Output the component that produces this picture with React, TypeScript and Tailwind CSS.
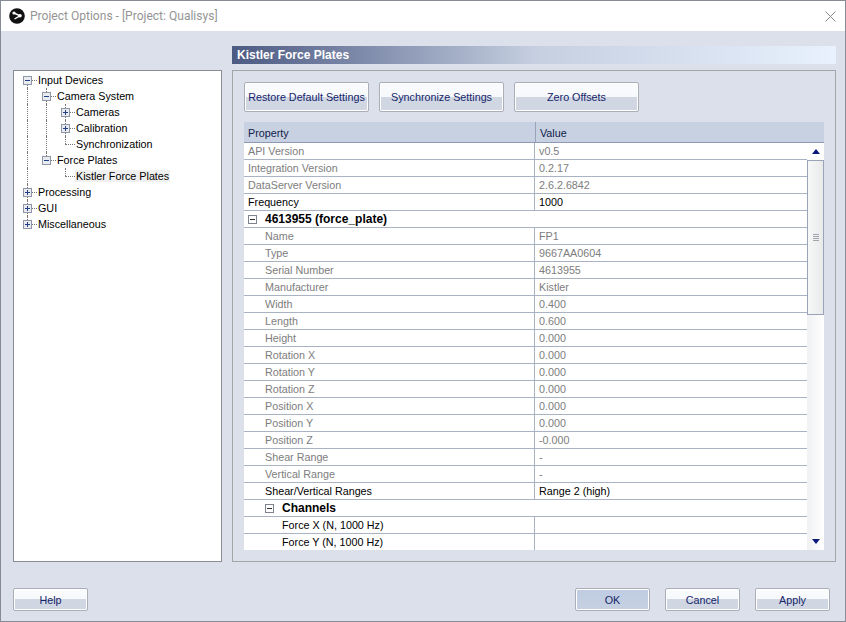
import type { ReactNode } from "react";

const font = { fontFamily: '"Liberation Sans", sans-serif' };

const Btn = ({ label, active, className }: { label: string; active?: boolean; className: string }) => (
  <div
    className={`flex items-center justify-center rounded-[2px] border border-[#a9aeb8] text-[10.75px] text-[#15256b] shadow-[inset_0_0_0_1px_#ffffff] ${className} ${
      active
        ? "bg-gradient-to-b from-[#bfcce2] to-[#c6d0e1]"
        : "bg-[linear-gradient(to_bottom,#fafbfd_0%,#f6f8fb_50%,#d0d7e3_50%,#d0d7e3_100%)]"
    }`}
  >
    {label}
  </div>
);

const Box = ({ open }: { open?: boolean }) => (
  <svg width="9" height="9" viewBox="0 0 9 9" className="shrink-0">
    <rect x="0.5" y="0.5" width="8" height="8" fill="#e9ebef" stroke="#8d97a8" />
    <path d={open ? "M2 4.5H7" : "M2 4.5H7M4.5 2V7"} stroke="#20408a" fill="none" />
  </svg>
);

// one line of the tree, the dotted guides are drawn per row
const TreeRow = ({
  depth,
  label,
  box,
  selected,
  guides = [],
  last,
  first,
}: {
  depth: number;
  label: string;
  box?: "open" | "closed";
  selected?: boolean;
  guides?: number[];
  last?: boolean;
  first?: boolean;
}) => {
  const left = 9 + depth * 19;
  return (
    <div className="relative h-4 text-[10.75px] text-black">
      {guides.map((g) => (
        <span key={g} className="absolute top-0 h-4 border-l border-dotted border-[#777]" style={{ left: 13 + g * 19 }} />
      ))}
      {last && <span className="absolute top-0 h-2 border-l border-dotted border-[#777]" style={{ left: 13 + depth * 19 }} />}
      {first && <span className="absolute top-2 h-2 border-l border-dotted border-[#777]" style={{ left: 13 }} />}
      <span className="absolute top-2 w-[10px] border-t border-dotted border-[#777]" style={{ left: left + 4 }} />
      {box && (
        <span className="absolute top-[4px]" style={{ left }}>
          <Box open={box === "open"} />
        </span>
      )}
      <span className={`absolute top-[2px] block h-3 px-px leading-3 ${selected ? "bg-[#f0f0f0]" : ""}`} style={{ left: left + 14 }}>
        {label}
      </span>
    </div>
  );
};

const Tree = () => (
  <div className="h-[492px] w-[209px] shrink-0 border border-[#8a8d94] bg-white pt-[1px]">
    <TreeRow depth={0} label="Input Devices" box="open" first />
    <TreeRow depth={1} label="Camera System" box="open" guides={[0, 1]} />
    <TreeRow depth={2} label="Cameras" box="closed" guides={[0, 1, 2]} />
    <TreeRow depth={2} label="Calibration" box="closed" guides={[0, 1, 2]} />
    <TreeRow depth={2} label="Synchronization" guides={[0, 1]} last />
    <TreeRow depth={1} label="Force Plates" box="open" guides={[0]} last />
    <TreeRow depth={2} label="Kistler Force Plates" guides={[0]} last selected />
    <TreeRow depth={0} label="Processing" box="closed" guides={[0]} />
    <TreeRow depth={0} label="GUI" box="closed" guides={[0]} />
    <TreeRow depth={0} label="Miscellaneous" box="closed" last />
  </div>
);

const Row = ({
  name,
  value = "",
  ro,
  indent = 4,
}: {
  name: string;
  value?: string;
  ro?: boolean;
  indent?: number;
}) => (
  <div className={`flex h-[17px] border-b border-[#aab3c3] text-[10.75px] leading-4 ${ro ? "text-[#7d7d7d]" : "text-black"}`}>
    <div className="w-[291px] shrink-0 border-r border-[#aab3c3]" style={{ paddingLeft: indent }}>
      {name}
    </div>
    <div className="flex-1 pl-[4px]">{value}</div>
  </div>
);

const Group = ({ name, indent }: { name: string; indent: number }) => (
  <div className="flex h-[17px] items-center border-b border-[#aab3c3] text-[12px] font-bold text-black" style={{ paddingLeft: indent }}>
    <svg width="9" height="9" viewBox="0 0 9 9" className="mr-2 shrink-0">
      <rect x="0.5" y="0.5" width="8" height="8" fill="#fff" stroke="#7d8490" />
      <path d="M2 4.5H7" stroke="#333" />
    </svg>
    {name}
  </div>
);

const plate: [string, string][] = [
  ["Name", "FP1"],
  ["Type", "9667AA0604"],
  ["Serial Number", "4613955"],
  ["Manufacturer", "Kistler"],
  ["Width", "0.400"],
  ["Length", "0.600"],
  ["Height", "0.000"],
  ["Rotation X", "0.000"],
  ["Rotation Y", "0.000"],
  ["Rotation Z", "0.000"],
  ["Position X", "0.000"],
  ["Position Y", "0.000"],
  ["Position Z", "-0.000"],
  ["Shear Range", "-"],
  ["Vertical Range", "-"],
];

const Scrollbar = () => (
  <div className="flex w-[17px] shrink-0 flex-col bg-gradient-to-r from-[#f0f1f3] to-white">
    <div className="flex h-[17px] items-center justify-center bg-white">
      <div className="h-0 w-0 border-x-[4.5px] border-b-[5px] border-x-transparent border-b-[#0b1a78]" />
    </div>
    <div className="flex h-[155px] items-center justify-center border border-[#9aa3b8] bg-gradient-to-r from-[#f6f7f7] to-[#e9eaea]">
      <div className="flex w-[6px] flex-col gap-px">
        {[0, 1, 2, 3].map((i) => (
          <div key={i} className="h-px bg-[#a0a5b0]" />
        ))}
      </div>
    </div>
    <div className="flex-1" />
    <div className="flex h-[17px] items-center justify-center">
      <div className="h-0 w-0 border-x-[4.5px] border-t-[5px] border-x-transparent border-t-[#0b1a78]" />
    </div>
  </div>
);

const Grid = () => (
  <div className="h-[428px] overflow-hidden">
    <div className="flex h-[21px] border-b border-[#8e99b3] bg-[#c8d1e2] text-[10.75px] leading-[22px] text-[#10204a]">
      <div className="w-[292px] shrink-0 border-r border-[#9aa3b8] pl-[4px]">Property</div>
      <div className="flex-1 pl-[4px]">Value</div>
    </div>
    <div className="flex h-[407px] bg-white">
      <div className="min-w-0 flex-1 overflow-hidden">
        <Row name="API Version" value="v0.5" ro />
        <Row name="Integration Version" value="0.2.17" ro />
        <Row name="DataServer Version" value="2.6.2.6842" ro />
        <Row name="Frequency" value="1000" />
        <Group name="4613955 (force_plate)" indent={4} />
        {plate.map(([n, v]) => (
          <Row key={n} name={n} value={v} ro indent={21} />
        ))}
        <Row name="Shear/Vertical Ranges" value="Range 2 (high)" indent={21} />
        <Group name="Channels" indent={21} />
        <Row name="Force X (N, 1000 Hz)" indent={38} />
        <Row name="Force Y (N, 1000 Hz)" indent={38} />
      </div>
      <Scrollbar />
    </div>
  </div>
);

const Panel = ({ children }: { children: ReactNode }) => (
  <div className="h-[492px] border border-[#a3a5a9] px-[11px] pt-[11px]">{children}</div>
);

export default function App() {
  return (
    <div className="flex h-[622px] w-[846px] flex-col border border-[#868b96] bg-[#dce0ea]" style={font}>
      <div className="flex h-[30px] shrink-0 items-center bg-white pl-[8px] pr-[9px]">
        <svg width="16" height="16" viewBox="0 0 16 16" className="shrink-0">
          <circle cx="8" cy="8" r="7.8" fill="#111" />
          <path d="M5 5 11 7.8 5.5 11" fill="none" stroke="#fff" strokeWidth="1.4" />
          <circle cx="5" cy="5" r="1.6" fill="#fff" />
          <circle cx="11" cy="7.8" r="1.8" fill="#fff" />
        </svg>
        <span className="ml-[5px] text-[12.05px] text-[#959595]" style={{ fontFamily: "Roboto, sans-serif" }}>
          Project Options - [Project: Qualisys]
        </span>
        <svg width="11" height="11" viewBox="0 0 11 11" className="ml-auto">
          <path d="M.5.5l10 10M10.5.5l-10 10" stroke="#8a8a8a" fill="none" />
        </svg>
      </div>
      <div className="flex flex-1 gap-[10px] pl-[12px] pr-[9px] pt-[15px]">
        <div className="flex flex-col pt-[24px]">
          <Tree />
        </div>
        <div className="flex min-w-0 flex-1 flex-col">
          <div className="mb-[6px] flex h-[18px] items-center bg-gradient-to-r from-[#4d5a82] via-[#c5cfe0] to-[#e8f1fd] pl-[5px] text-[12px] font-bold text-white">
            Kistler Force Plates
          </div>
          <Panel>
            <div className="mb-[10px] flex gap-[10px]">
              <Btn label="Restore Default Settings" className="h-[30px] w-[125px]" />
              <Btn label="Synchronize Settings" className="h-[30px] w-[125px]" />
              <Btn label="Zero Offsets" className="h-[30px] w-[125px]" />
            </div>
            <Grid />
          </Panel>
        </div>
      </div>
      <div className="mb-[10px] flex h-[23px] shrink-0 gap-[15px] pl-[12px] pr-[15px]">
        <Btn label="Help" className="w-[75px] pt-px" />
        <Btn label="OK" active className="ml-auto w-[75px] pt-px" />
        <Btn label="Cancel" className="w-[75px] pt-px" />
        <Btn label="Apply" className="w-[75px] pt-px" />
      </div>
    </div>
  );
}
